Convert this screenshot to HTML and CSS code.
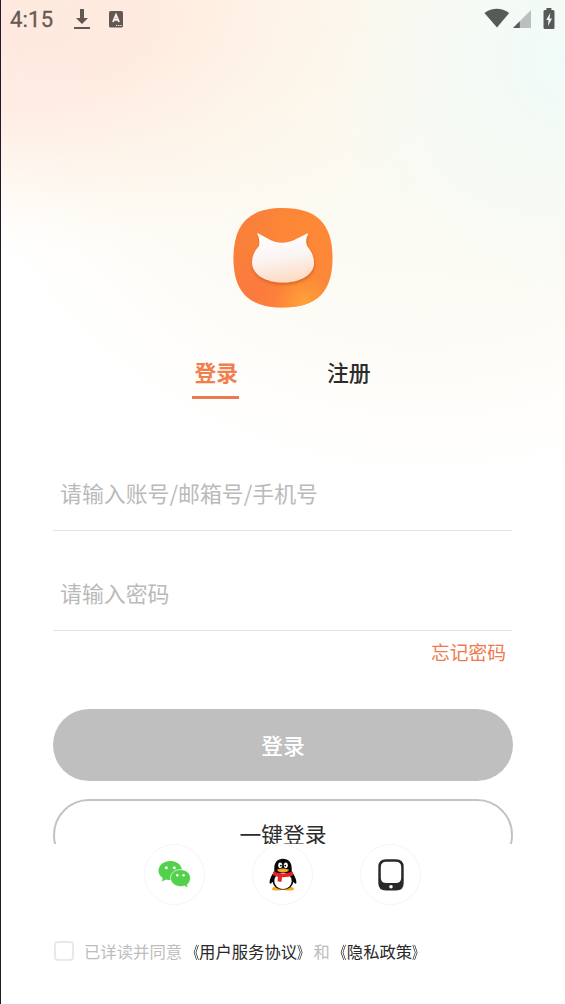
FILE: index.html
```html
<!DOCTYPE html>
<html lang="zh-CN">
<head>
<meta charset="utf-8">
<title>登录</title>
<link rel="stylesheet" href="styles.css">
</head>
<body>
<div class="screen">
  <header class="status">
    <span class="clock">4:15</span>
    <svg class="download" width="16" height="22" viewBox="0 0 16 22"><path d="M6 1h4v9h4l-6 6-6-6h4zM0 19h16v2H0z"/></svg>
    <svg class="input-mode" width="14" height="17" viewBox="0 0 14 17"><rect width="14" height="16.5" rx="1.5"/><path d="M4 11 7 4l3 7M5 8.800h4" fill="none" stroke="#fff1e9" stroke-width="1.9"/><path d="M7 14.500h1.200M9.200 14.500h1.200M11.400 14.500h1.200" stroke="#fff1e9" stroke-width="1"/></svg>
    <span class="spacer"></span>
    <svg class="wifi" width="26" height="20" viewBox="0 0 26 20"><path d="M.4 5Q12.800-3.300 25.200 5L13 19.600z"/></svg>
    <svg class="signal" width="18" height="18" viewBox="0 0 18 18"><path d="M18 0v18H0z" fill="#b9c0be"/><path d="M6.800 11.200V18H0z"/></svg>
    <svg class="battery" width="12" height="21" viewBox="0 0 12 21"><path d="M3.400 0h5v2H10q1.500 0 1.500 1.500V19.500Q11.500 21 10 21H2Q.5 21 .5 19.500V3.500Q.5 2 2 2h1.400z"/><path d="M7.300 5 3.200 12h2.300L5 18l4-7.400H6.500z" fill="#f3faf8"/></svg>
  </header>
  <main class="form">
    <svg class="logo" width="100" height="100" viewBox="0 0 100 100">
      <defs>
        <linearGradient id="orange" x1="0" y1=".3" x2="1" y2=".7"><stop offset="0" stop-color="#f97f3c"/><stop offset=".55" stop-color="#fe8835"/><stop offset="1" stop-color="#fc8739"/></linearGradient>
        <radialGradient id="glow" cx=".72" cy=".96" r=".3"><stop offset="0" stop-color="#ffa439"/><stop offset="1" stop-color="#ff9d38" stop-opacity="0"/></radialGradient>
        <radialGradient id="coral" cx=".2" cy=".82" r=".5"><stop offset="0" stop-color="#fb793f"/><stop offset="1" stop-color="#fb793f" stop-opacity="0"/></radialGradient>
        <linearGradient id="white" x1=".4" y1="0" x2=".6" y2="1"><stop offset="0" stop-color="#fff"/><stop offset=".5" stop-color="#faf4f2"/><stop offset="1" stop-color="#ffd9bf"/></linearGradient>
        <filter id="shadow" x="-20%" y="-20%" width="140%" height="150%"><feDropShadow dx=".5" dy="2" stdDeviation="1.500" flood-color="#ba4c12" flood-opacity=".55"/></filter>
      </defs>
      <path d="M50 0C84 0 99.500 16 99.500 50S84 99.500 50 99.500.5 84 .5 50 16 0 50 0z" fill="url(#orange)"/>
      <path d="M50 0C84 0 99.500 16 99.500 50S84 99.500 50 99.500.5 84 .5 50 16 0 50 0z" fill="url(#coral)"/>
      <path d="M50 0C84 0 99.500 16 99.500 50S84 99.500 50 99.500.5 84 .5 50 16 0 50 0z" fill="url(#glow)"/>
      <path d="M24.300 26Q24 24.800 25.500 25.600C36 31 40 34.800 49 34.800S63 31 74 25.500Q75.500 25 75 26.500C73 30 72.500 34 74 38Q81 46 81 55C81 67 67 74.500 50 74.500S19 67 19 54Q19 46 26 38C27 33 26 29 24.300 26z" fill="url(#white)" filter="url(#shadow)"/>
    </svg>
    <nav class="tabs"><a class="tab active">登录</a><a class="tab">注册</a></nav>
    <div class="field">请输入账号/邮箱号/手机号</div>
    <div class="field second">请输入密码</div>
    <a class="forgot">忘记密码</a>
    <button class="button primary">登录</button>
    <button class="button quick">一键登录</button>
  </main>
  <section class="social">
    <a class="circle"><svg width="34" height="28" viewBox="0 0 34 28">
      <path d="M12.500 0C5.600 0 .5 4.300.5 9.700c0 3 1.600 5.500 4.200 7.300L3.900 20.400l4.200-1.900q2.200.7 4.900.6C20 19 24 15 24 9.700S19 0 12.500 0z" fill="#53d14c"/>
      <path d="M22.500 8.600c-5.800 0-10 3.800-10 8.400s4.200 8.500 10 8.500q2.200 0 4-.6l3.500 2-.7-3.300c2-1.600 3.200-3.900 3.200-6.600 0-4.600-4.300-8.400-10-8.400z" fill="#53d14c" stroke="#fff" stroke-width=".7"/>
      <g fill="#fff"><circle cx="8.300" cy="6.700" r="1.500"/><circle cx="16.300" cy="6.700" r="1.500"/><circle cx="19.300" cy="14.300" r="1.200"/><circle cx="25.600" cy="14.300" r="1.200"/></g>
    </svg></a>
    <a class="circle"><svg width="28" height="33" viewBox="0 0 28 33">
      <path d="M3 31q0-2.500 6-2.500h10q6 0 6 2.500 0 1.500-5.500 1.500-4 0-5.500-1-2 1-5.500 1Q3 32.500 3 31z" fill="#f7a819"/>
      <path d="M14 .7C8.500.7 5.300 4.500 5.300 10v3.500C3 16.500.4 21 .6 25q.6 2 3-1.300C4.500 28.500 8 31.500 14 31.500s9.500-3 10.400-7.800q2.400 3.300 3 1.300c.2-4-2.400-8.500-4.700-11.500V10C22.700 4.500 19.500.7 14 .7z" fill="#080808"/>
      <ellipse cx="14" cy="23" rx="8.700" ry="8" fill="#fff"/>
      <ellipse cx="11.200" cy="7.200" rx="2" ry="2.800" fill="#fff"/><ellipse cx="16.800" cy="7.200" rx="2" ry="2.800" fill="#fff"/><circle cx="11.900" cy="7.600" r=".9"/><circle cx="16.200" cy="7.600" r=".9"/>
      <path d="M8 11.700q6-2.500 12 0-1 2.700-6 2.700t-6-2.700z" fill="#f6a91c"/>
      <path d="M4.500 13.500q9.500 4.300 19 0l1 3.500q-4.500 2.500-11.500 2.300l-.4 4.200q-1.800.6-4-.2l.3-4.500q-3-.6-5.200-2z" fill="#e9222a"/>
    </svg></a>
    <a class="circle"><svg width="26" height="32" viewBox="0 0 26 32"><path fill-rule="evenodd" d="M8 .3h10Q25.700.3 25.700 8v16q0 7.500-7.700 7.500H8Q.3 31.500.3 24V8Q.3.3 8 .3zM8.300 2.700Q2.800 2.700 2.800 8.200v10.500q0 5.300 5.500 5.300h9.400q5.500 0 5.500-5.300V8.200q0-5.500-5.500-5.500z" fill="#292929"/><circle cx="13" cy="27.800" r="1.800" fill="#fff"/></svg></a>
  </section>
  <footer class="agreement"><span class="checkbox"></span><p>已详读并同意<b><span class="open">《</span>用户服务协议<span class="close">》</span></b>和<b><span class="open">《</span>隐私政策<span class="close">》</span></b></p></footer>
</div>
</body>
</html>
```
FILE: styles.css
```css
* { box-sizing: border-box; }
body { margin: 0; background: #fff; }
.screen {
  width: 565px;
  height: 1004px;
  display: flex;
  flex-direction: column;
  overflow: hidden;
  border-left: 1px solid #211b29;
  font-family: "Noto Sans CJK SC", sans-serif;
  background:
    radial-gradient(ellipse 400px 235px at 0 25px, rgba(255, 229, 220, .8) 0%, rgba(255, 231, 221, .7) 35%, rgba(255, 238, 227, .35) 65%, rgba(255, 243, 233, .1) 86%, rgba(255, 246, 238, 0) 100%),
    radial-gradient(ellipse 250px 250px at 100% 6%, rgba(240, 251, 249, .95), rgba(243, 251, 248, .5) 50%, rgba(246, 251, 247, 0)),
    radial-gradient(ellipse 430px 280px at 28% 0, rgba(255, 243, 229, .95) 10%, rgba(255, 247, 234, .6) 50%, rgba(254, 250, 239, .15) 82%, rgba(254, 251, 243, 0) 100%),
    radial-gradient(ellipse 500px 490px at 75% 0, #f9faf2 0%, #fbfaf2 50%, rgba(252, 250, 243, .75) 72%, rgba(254, 252, 248, .35) 88%, rgba(255, 255, 255, 0) 100%),
    #fff;
}
.status { height: 40px; flex: none; display: flex; align-items: flex-start; padding: 8px 10px 0 9px; }
.status svg { fill: #625853; flex: none; }
.clock { width: 46px; font: 400 22px/24px Roboto, sans-serif; color: #655955; letter-spacing: .2px; -webkit-text-stroke: .3px #655955; }
.download { margin-left: 18px; }
.input-mode { margin: 3px 0 0 19px; }
.spacer { flex: 1; }
.status .wifi { fill: #565b59; }
.status .signal { fill: #565b59; margin: 2px 0 0 3px; }
.status .battery { fill: #565b59; margin-left: 12px; }
.form { height: 804px; flex: none; overflow: hidden; display: flex; flex-direction: column; align-items: center; padding: 168px 52px 0; }
.logo { flex: none; margin-right: 1px; }
.tabs { width: 180px; display: flex; justify-content: space-between; margin: 48px 3px 0 0; }
.tab { height: 43px; padding: 0 1px 0 3px; border-bottom: 3px solid transparent; color: #2c2c2a; font-size: 21.800px; line-height: 32px; font-weight: 500; }
.tab.active { color: #f27e4b; border-color: #eb7a4f; font-weight: 700; }
.field { width: 459px; height: 72px; flex: none; margin: 60px 1px 0 0; padding-left: 7px; border-bottom: 1px solid #e3e3e3; color: #bababa; font-size: 21.9px; line-height: 67px; font-weight: 400; }
.second { margin-top: 28px; }
.forgot { align-self: flex-end; margin: 5px 7px 1px 0; color: #f0794d; font-size: 18.8px; line-height: 31px; height: 30px; font-weight: 400; }
.button { width: 460px; height: 72px; flex: none; padding: 0; border-radius: 36px; font-family: inherit; font-size: 21.8px; }
.primary { margin-top: 42px; padding-bottom: 2px; border: 0; background: #bfbfbf; color: #fff; font-weight: 500; }
.quick { margin-top: 18px; padding-bottom: 4px; border: 2px solid #c3c3c3; background: #fff; color: #2c2c2c; font-weight: 400; }
.social { flex: none; display: flex; justify-content: center; gap: 47px; padding-right: 1px; }
.circle { width: 61px; height: 61px; display: flex; align-items: center; justify-content: center; border: 1px solid #f5f5f5; border-radius: 50%; background: #fff; }
.agreement { display: flex; align-items: center; margin-top: 31px; padding-left: 53px; color: #bdbdbd; font-size: 16.35px; line-height: 30px; font-weight: 400; }
.agreement p { margin: 0 0 0 10px; }
.agreement b { margin-left: .6px; color: #292929; font-weight: 400; }
.open, .close { display: inline-block; transform: scaleX(.72); }
.open { transform-origin: right; }
.close { transform-origin: left; }
.checkbox { width: 20px; height: 20px; border: 2px solid #e9e9e9; border-radius: 4px; }
```
